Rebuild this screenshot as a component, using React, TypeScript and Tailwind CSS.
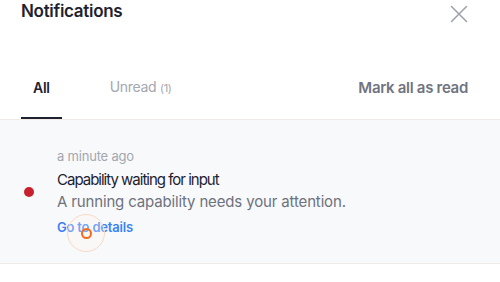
import React from "react";

/**
 * Close icon
 */
const CloseIcon: React.FC = () => (
    <svg width="18" height="18" viewBox="0 0 18 18" fill="none" className="text-[#9ca0aa]">
        <path d="M1.5 1.5L16.5 16.5M16.5 1.5L1.5 16.5" stroke="currentColor" strokeWidth="1.5" strokeLinecap="round" />
    </svg>
);

const App: React.FC = () => {
    return (
        <div className="w-[500px] h-[282px] bg-white overflow-hidden font-['Inter',sans-serif] text-[#1e2230]">
            {/* Header */}
            <div className="flex items-start justify-between pl-[21px] pr-[32px] pt-[1px]">
                <h1 className="text-[17px] leading-[20px] font-semibold tracking-[-0.3px]">Notifications</h1>
                <button type="button" className="mt-[4px]">
                    <CloseIcon />
                </button>
            </div>

            {/* Tabs */}
            <div className="mt-[54px] flex items-end justify-between px-[21px] border-b border-[#efeae6]">
                <div className="flex items-end gap-[48px]">
                    <button type="button" className="px-[12px] pb-[19px] border-b-2 border-[#1e2230] text-[14px] leading-[20px] font-semibold tracking-[-0.3px]">
                        All
                    </button>
                    <button type="button" className="pb-[21px] text-[14px] leading-[20px] text-[#a3a7b0] tracking-[-0.3px]">
                        Unread <span className="text-[11px]">(1)</span>
                    </button>
                </div>
                <button type="button" className="pb-[20px] pr-[11px] text-[15px] leading-[22px] font-semibold text-[#70747f] tracking-[-0.3px]">
                    Mark all as read
                </button>
            </div>

            {/* Notification */}
            <div className="relative flex items-center bg-[#f8f9fb] border-b border-[#efeae6] h-[144px]">
                <div className="w-[57px] flex justify-center pl-[1px] pt-[1px]">
                    <span className="block w-[10px] h-[10px] rounded-full bg-[#c8202f]" />
                </div>
                <div className="flex flex-col pt-[1px]">
                    <p className="text-[13px] leading-[18px] text-[#a3a7b0] tracking-[-0.2px]">a minute ago</p>
                    <p className="mt-[4px] text-[15px] leading-[22px] text-[#1e2230] tracking-[-1px]">Capability waiting for input</p>
                    <p className="text-[15px] leading-[22px] text-[#6e727d] tracking-[-0.15px]">A running capability needs your attention.</p>
                    <a className="mt-[4px] text-[13px] leading-[20px] font-semibold text-[#3b82f6] tracking-[-0.2px]">Go to details</a>
                </div>

                {/* Cursor marker */}
                <div className="absolute left-[67px] top-[94px] w-[38px] h-[38px] rounded-full border border-[#fcd9c5] bg-[#fff4ee]/30 flex items-center justify-center">
                    <div className="w-[11px] h-[11px] rounded-full border-2 border-[#f26a1b]" />
                </div>
            </div>
        </div>
    );
};

export default App;
